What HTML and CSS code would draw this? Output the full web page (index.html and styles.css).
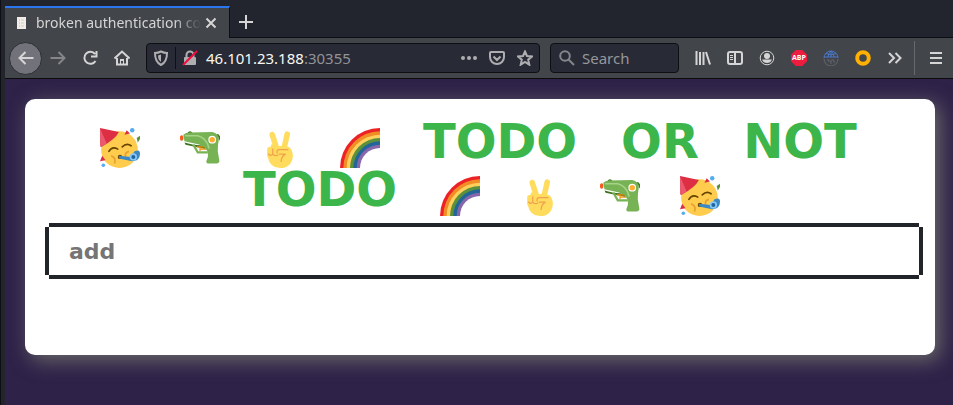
FILE: index.html
```html
<!DOCTYPE html>
<html lang="en">
<head>
<meta charset="utf-8">
<title>broken authentication co</title>
<link rel="stylesheet" href="styles.css">
</head>
<body>
<svg class="defs" aria-hidden="true">
  <symbol id="party" viewBox="0 0 36 36">
    <circle cx="17.500" cy="19.500" r="16.500" fill="#ffcc4d"/>
    <path d="M0 0 17 3.500Q14 10 1 17L0 16Z" fill="#dd2e44"/>
    <path d="M0 0 6 14 1 17 0 16Z" fill="#ea596e"/>
    <path d="M24 2 22 6 27 5ZM2 25 0 30 5 29Z" fill="#dd2e44"/>
    <path d="M36 7 33 9 34 13 36 10Z" fill="#5c913b"/>
    <circle cx="29" cy="2" r="2" fill="#55acee"/>
    <circle cx="3" cy="33.500" r="1.600" fill="#55acee"/>
    <path d="M8 21q3-5 8-2M20 17q4-4 8-1" fill="none" stroke="#664500" stroke-width="1.500" stroke-linecap="round"/>
    <path d="M10 25q5 2 3 7M26 21q-4 1-3 5" fill="none" stroke="#e8a02e" stroke-width="1.500"/>
    <circle cx="18" cy="26" r="2" fill="#664500"/>
    <path d="M17 25 28 26 31 21Q36 19 36 23 36 27 33 29L29 30 17 27.500Z" fill="#3b88c3"/>
    <circle cx="30" cy="26" r="3.300" fill="#88c9f9"/>
    <circle cx="30" cy="26" r="1.800" fill="#226699"/>
  </symbol>
  <symbol id="gun" viewBox="0 0 36 36">
    <path d="M7 5q2-3 4 0M33 6q3 0 3 5" fill="#3e721d" stroke="#3e721d"/>
    <path d="M4 13 12 15 23 16 23 19 5 15Z" fill="#3e721d"/>
    <path d="M12 15 16 22H25" fill="none" stroke="#77b255" stroke-width="2"/>
    <path d="M15 17H24M18 21V17M18 19H24" stroke="#f4900c" fill="none"/>
    <path d="M3 6Q5 4 9 4L29 3.500Q35 5 35 10 34 15 34 21L35.500 30Q35 32 33 32H25Q23 31 24 29 27 24 23 18 20 15 13 14L4 12Z" fill="#77b255"/>
    <path d="M5 7H16Q24 9 26 18" fill="none" stroke="#a6d388" stroke-width="1.500" stroke-linecap="round"/>
    <rect y="6.500" width="3" height="5" rx="1.500" fill="#f45d22"/>
    <circle cx="29" cy="10.500" r="3.500" fill="#fff"/><circle cx="29" cy="10.500" r="2.500" fill="#ffac33"/>
  </symbol>
  <symbol id="peace" viewBox="0 0 36 36">
    <path d="M15.500 20 11 6M21.500 19 24.500 5.500" stroke="#ffdc5d" stroke-width="5" stroke-linecap="round"/>
    <rect x="6.500" y="17" width="4.500" height="10" rx="2" fill="#ffdc5d"/>
    <rect x="9.500" y="14.500" width="5" height="11" rx="2.500" fill="#ffdc5d"/>
    <path d="M7 22Q12 17 20 16L26 17Q30 20 29.500 26 28 36 18 36 9 36 7 26Z" fill="#ffdc5d"/>
    <path d="M7.500 23q2 3 4 .5v-5M11.500 23.500q2 2.500 5 .5M15.500 23q-1-3.500 2-3.500h8M17 23.500h6q-4 2-4 7" fill="none" stroke="#f0a04f" stroke-width="1.100"/>
  </symbol>
  <symbol id="rainbow" viewBox="0 0 36 36">
    <path d="M0 36A36 36 0 0 1 36 0V36Z" fill="#ed2226"/>
    <path d="M3 36A33 33 0 0 1 36 3V36Z" fill="#f18d25"/>
    <path d="M6 36A30 30 0 0 1 36 6V36Z" fill="#ffd15c"/>
    <path d="M9 36A27 27 0 0 1 36 9V36Z" fill="#5c913b"/>
    <path d="M12 36A24 24 0 0 1 36 12V36Z" fill="#226699"/>
    <path d="M15 36A21 21 0 0 1 36 15V36Z" fill="#8767ac"/>
    <path d="M18 36A18 18 0 0 1 36 18V36Z" fill="#fff"/>
  </symbol>
</svg>
<div class="window">
  <header>
    <div class="tabs">
      <div class="tab">
        <svg class="favicon" viewBox="0 0 9 12"><path d="M0 0H9V12H0Z" fill="#f3ebe8" stroke="none"/><path d="M2 3H3M2 6H3M2 9H3" stroke="#e9a9a0"/><path d="M4 3H7M4 6H7M4 9H7" stroke="#b9dcc4"/></svg>
        <span class="tab-title">broken authentication co</span>
        <button class="close" aria-label="Close tab"><svg viewBox="0 0 12 12"><path d="M1.500 1.500 10.500 10.500M10.500 1.500 1.500 10.500"/></svg></button>
      </div>
      <button class="new-tab" aria-label="New tab"><svg viewBox="0 0 16 16"><path d="M8 1V15M1 8H15"/></svg></button>
    </div>
    <nav class="toolbar">
      <button class="tool back" aria-label="Back"><svg viewBox="0 0 16 16"><path d="M15.500 8H1.500M7.500 2 1.500 8 7.500 14"/></svg></button>
      <button class="tool forward" aria-label="Forward"><svg viewBox="0 0 16 16"><path d="M.5 8H14.500M8.500 2 14.500 8 8.500 14"/></svg></button>
      <button class="tool" aria-label="Reload"><svg viewBox="0 0 16 16"><path d="M13 4A6 6 0 1 0 13.500 11M14.500 1V6.500H9"/></svg></button>
      <button class="tool" aria-label="Home"><svg viewBox="0 0 16 16"><path d="M.5 8.500 8 1.500 15.500 8.500M3 8V14.500H13V8"/><path d="M6 9H10V15H9V11H7V15H6Z" class="solid"/></svg></button>
      <div class="field address">
        <svg class="icon shield" viewBox="0 0 16 16"><path d="M8 1.500C10 2.500 12 3 14 3 14 9 12 13 8 15 4 13 2 9 2 3 4 3 6 2.500 8 1.500Z"/><path d="M8 4.500V12Q5 10 5 5.500Z" class="solid"/></svg>
        <span class="rule"></span>
        <svg class="icon" viewBox="0 0 16 16"><path d="M4.500 8V5A3.500 3.500 0 0 1 11.500 5V8"/><rect x="2" y="7" width="12" height="8" rx="1" class="solid"/><path d="M1 15 15 1" class="slash"/></svg>
        <span class="url" role="textbox" aria-label="Address">46.101.23.188<span class="port">:30355</span></span>
        <svg class="icon dots" viewBox="0 0 16 16"><circle cx="2" cy="8" r="2"/><circle cx="8" cy="8" r="2"/><circle cx="14" cy="8" r="2"/></svg>
        <svg class="icon pocket" viewBox="0 0 16 16"><path d="M2 2H14Q15 2 15 3V7A7 7 0 0 1 1 7V3Q1 2 2 2ZM4.500 6.500 8 10 11.500 6.500"/></svg>
        <svg class="icon star" viewBox="0 0 16 16"><path d="M8 1.500 10 6 15 6.500 11.200 9.700 12.300 14.700 8 12 3.700 14.700 4.800 9.700 1 6.500 6 6Z"/></svg>
      </div>
      <label class="field search">
        <svg class="icon" viewBox="0 0 16 16"><circle cx="6" cy="6" r="4.800"/><path d="M9.500 9.500 15 15"/></svg>
        <input type="search" placeholder="Search" aria-label="Search">
      </label>
      <button class="tool" aria-label="Library"><svg viewBox="0 0 16 16"><path d="M1.500 1V15M5 2V15M8.500 2V15M11 2 15 14.500"/></svg></button>
      <button class="tool" aria-label="Sidebar"><svg viewBox="0 0 16 16"><rect x="1" y="2" width="14" height="12" rx="2"/><path d="M8 2V14"/><path d="M3 5.500H6M3 7.500H6M3 9.500H6" class="thin"/></svg></button>
      <button class="tool" aria-label="Account"><svg viewBox="0 0 16 16"><circle cx="8" cy="8" r="6.800" class="thin"/><circle cx="8" cy="6" r="3" class="solid"/><path d="M3 9.500H13Q11.500 13 8 13T3 9.500" class="solid"/></svg></button>
      <button class="tool" aria-label="Adblock Plus"><span class="abp">ABP</span></button>
      <button class="tool globe" aria-label="Proxy"><svg viewBox="0 0 16 16"><path d="M1 8A7 7 0 0 1 15 8M1 7H15M8 1V7M3 3.500Q8 6 13 3.500M5 7Q5 3 8 1 11 3 11 7"/><path class="lower" d="M1 9A7 7 0 0 0 15 9M5 9V11H8V14M11 13V10H8"/></svg></button>
      <button class="tool ring" aria-label="Extension"><svg viewBox="0 0 16 16"><circle cx="8" cy="8" r="5.800"/></svg></button>
      <button class="tool" aria-label="More tools"><svg viewBox="0 0 16 16"><path d="M2 3 7 8 2 13M8.500 3 13.500 8 8.500 13"/></svg></button>
      <span class="divider"></span>
      <button class="tool" aria-label="Menu"><svg viewBox="0 0 16 16"><path d="M2 3H14M2 8H14M2 13H14"/></svg></button>
    </nav>
  </header>
  <main>
    <section class="card">
      <h1>
        <svg><use href="#party"/></svg><svg><use href="#gun"/></svg><svg><use href="#peace"/></svg><svg><use href="#rainbow"/></svg>
        <span class="four">TODO</span> <span class="two">OR</span> <span class="three">NOT</span> <span class="four">TODO</span>
        <svg><use href="#rainbow"/></svg><svg><use href="#peace"/></svg><svg><use href="#gun"/></svg><svg><use href="#party"/></svg>
      </h1>
      <input class="todo" type="text" placeholder="add" aria-label="add">
    </section>
  </main>
</div>
</body>
</html>
```
FILE: styles.css
```css
* { box-sizing: border-box; }
body {
  margin: 0;
  min-height: 100vh;
  background: #22252c;
  font-family: "Noto Sans", sans-serif;
}
button { padding: 0; border: 0; background: none; color: inherit; }
.defs { display: none; }
.window {
  display: flex;
  flex-direction: column;
  min-height: 100vh;
  padding-left: 4px;
  border-left: 1px solid #0d0f14;
}
header { color: #d5d5d5; }
header svg {
  width: 16px;
  height: 16px;
  flex: none;
  fill: none;
  stroke: currentColor;
  stroke-width: 2;
}
header svg .solid { fill: currentColor; stroke: none; }
header svg .thin { stroke-width: 1; }

.tabs { display: flex; height: 38px; padding-top: 6px; background: #23252e; }
.tab {
  display: flex;
  align-items: center;
  width: 225px;
  padding: 0 12px;
  border-top: 2px solid #2a77f0;
  border-right: 1px solid #0d0f14;
  background: #42454a;
}
header .favicon { width: 9px; height: 12px; margin-right: 10px; stroke-width: 1; }
.tab-title {
  flex: 1;
  white-space: nowrap;
  font-size: 14px;
  line-height: 20px;
  mask-image: linear-gradient(to right, #000 84%, transparent);
}
.close { display: flex; margin-left: 4px; }
header .close svg { width: 12px; height: 12px; }
.new-tab {
  display: flex;
  flex: 1;
  align-items: center;
  padding-left: 8px;
  border-bottom: 1px solid #0d0f14;
}

.toolbar {
  display: flex;
  align-items: center;
  height: 41px;
  padding: 0 1px 0 4px;
  border-bottom: 1px solid #0c0c0d;
  background: #42454a;
}
.tool {
  display: flex;
  align-items: center;
  justify-content: center;
  flex: none;
  width: 32px;
  height: 32px;
}
.back { width: 33px; height: 33px; border: 1px solid #2d2f34; border-radius: 50%; background: #72737a; }
.forward { color: #85868a; }
.field {
  display: flex;
  align-items: center;
  height: 30px;
  border: 1px solid #0e0f14;
  border-radius: 4px;
  background: #282a36;
}
.icon { color: #aeaeb0; }
.address { flex: 1; margin: 0 10px 0 8px; padding: 0 6px; }
.rule { width: 1px; height: 22px; margin: 0 6px; background: #0e0f14; }
.address .slash { stroke: #f5093f; }
.url { flex: 1; margin-left: 8px; font-size: 15px; line-height: 20px; color: #f8f8f2; }
.port { color: #929398; }
header .dots { fill: currentColor; stroke: none; }
.pocket, .star { margin-left: 12px; }
.search { width: 129px; margin-right: 8px; padding: 0 8px; gap: 7px; }
.search .icon { color: #85868b; }
.search input {
  width: 100%;
  min-width: 0;
  padding: 0;
  border: 0;
  outline: 0;
  background: none;
  font: 15px/20px "Noto Sans", sans-serif;
  color: #f8f8f2;
}
.search input::placeholder { color: #96979b; }
.abp {
  width: 16px;
  background: #ee1c3f;
  clip-path: polygon(30% 0, 70% 0, 100% 30%, 100% 70%, 70% 100%, 30% 100%, 0 70%, 0 30%);
  color: #fff;
  font: bold 7px/16px "Open Sans", sans-serif;
  text-align: center;
}
.globe { color: #4a78cc; }
header .globe svg { stroke-width: 1; }
.globe .lower { stroke: #66676c; }
.ring { color: #ffb000; }
header .ring svg { stroke-width: 4; }
.divider { width: 1px; height: 34px; margin: 0 5px 0 3px; background: #66686c; }

main { flex: 1; padding: 20px 18px 50px 20px; background: #2f2249; }
.card {
  padding: 29px 16px 80px 24px;
  border-radius: 10px;
  background: #fff;
  box-shadow: 5px 5px 20px #6c6c6a;
}
h1 {
  display: flex;
  flex-wrap: wrap;
  justify-content: center;
  gap: 8px 40px;
  margin: 0 8px 11px 0;
  color: #3cb54a;
  font: bold 48px/26px "DejaVu Sans", sans-serif;
}
h1 svg { width: 40px; height: 40px; }
h1 span { text-align: center; white-space: nowrap; }
.four { width: 160px; }
.two { width: 80px; }
.three { width: 120px; }
.todo {
  display: block;
  width: 100%;
  height: 48px;
  padding: 0 20px;
  border: 0;
  outline: 0;
  background: #fff;
  box-shadow: 0 -4px #212529, 0 4px #212529, -4px 0 #212529, 4px 0 #212529;
  color: #212529;
  font: bold 22px/28px "DejaVu Sans", sans-serif;
}
.todo::placeholder { color: #757575; }
```
